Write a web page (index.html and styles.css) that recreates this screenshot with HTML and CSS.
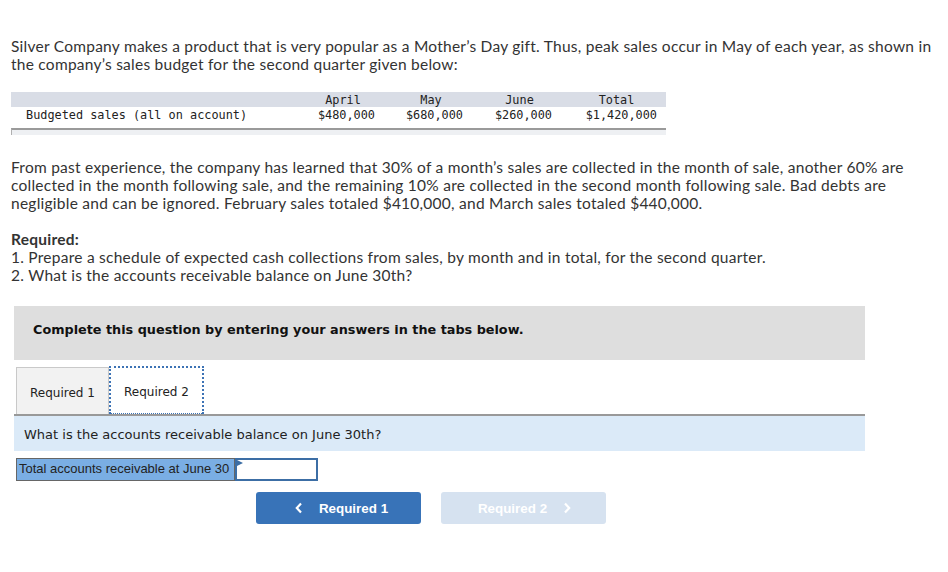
FILE: index.html
```html
<!DOCTYPE html>
<html>
<head>
<meta charset="utf-8">
<link rel="stylesheet" href="styles.css">
</head>
<body>
<div class="page">
  <p class="para p1">Silver Company makes a product that is very popular as a Mother’s Day gift. Thus, peak sales occur in May of each year, as shown in the company’s sales budget for the second quarter given below:</p>

  <div class="budget">
    <div class="brow head">
      <div class="lbl"></div>
      <div class="c c1">April</div>
      <div class="c c2">May</div>
      <div class="c c3">June</div>
      <div class="c c4">Total</div>
    </div>
    <div class="brow data">
      <div class="lbl">Budgeted sales (all on account)</div>
      <div class="c c1">$480,000</div>
      <div class="c c2">$680,000</div>
      <div class="c c3">$260,000</div>
      <div class="c c4">$1,420,000</div>
    </div>
    <div class="bfoot"></div>
  </div>

  <p class="para p2">From past experience, the company has learned that 30% of a month’s sales are collected in the month of sale, another 60% are collected in the month following sale, and the remaining 10% are collected in the second month following sale. Bad debts are negligible and can be ignored. February sales totaled $410,000, and March sales totaled $440,000.</p>

  <div class="para p3">
    <div class="req">Required:</div>
    <div>1. Prepare a schedule of expected cash collections from sales, by month and in total, for the second quarter.</div>
    <div>2. What is the accounts receivable balance on June 30th?</div>
  </div>

  <div class="banner">Complete this question by entering your answers in the tabs below.</div>

  <div class="tabs">
    <div class="tab">Required 1</div>
    <div class="tab active">Required 2</div>
  </div>
  <div class="question">What is the accounts receivable balance on June 30th?</div>

  <div class="answer">
    <div class="alabel">Total accounts receivable at June 30</div>
    <div class="ainput"><span class="flag"></span></div>
  </div>

  <div class="nav">
    <div class="btn prev"><svg class="chev" width="8" height="12" viewBox="0 0 8 12"><path d="M6 1.5 L1.8 6 L6 10.5" fill="none" stroke="#fff" stroke-width="2.2"/></svg><span>Required 1</span></div>
    <div class="btn next"><span>Required 2</span><svg class="chev" width="8" height="12" viewBox="0 0 8 12"><path d="M2 1.5 L6.2 6 L2 10.5" fill="none" stroke="#fff" stroke-width="2.2"/></svg></div>
  </div>
</div>
</body>
</html>
```
FILE: styles.css
```css
html, body { margin: 0; padding: 0; background: #fff; }
.page { padding: 37px 0 0 11px; width: 930px; }
.para {
  font-family: "Lato", "Liberation Sans", sans-serif;
  font-size: 15.5px;
  letter-spacing: 0.25px;
  line-height: 18px;
  color: #333;
  margin: 0;
}
.p1 { width: 930px; }
.budget { margin-top: 19px; width: 655px; font-family: "DejaVu Sans Mono", monospace; font-size: 11.85px; color: #222; }
.brow { display: flex; }
.brow.head { background: #d9dde6; height: 15px; line-height: 17px; }
.brow.data { height: 16px; line-height: 17px; }
.lbl { width: 285px; padding-left: 15px; box-sizing: border-box; white-space: pre; }
.c { text-align: right; box-sizing: border-box; }
.head .c { text-align: center; }
.c1 { width: 88px; padding-right: 9px; }
.c2 { width: 88px; padding-right: 9px; }
.c3 { width: 89px; padding-right: 9px; }
.c4 { width: 105px; padding-right: 9px; }
.head .c1 { padding-left: 6px; padding-right: 0; }
.head .c2 { padding-left: 6px; padding-right: 0; }
.head .c3 { padding-left: 6px; padding-right: 0; }
.head .c4 { padding-left: 6px; padding-right: 0; }
.bfoot { margin-top: 5px; height: 5px; border-top: 2px solid #9a9a9a; border-left: 1px solid #b0b0b0; background: #eef0f3; }
.p2 { margin-top: 23px; width: 900px; }
.p3 { margin-top: 18px; }
.req { font-weight: bold; }
.banner {
  margin: 22px 0 0 3px;
  width: 851px; height: 54px; box-sizing: border-box;
  background: #dedede;
  font-family: "DejaVu Sans", Verdana, sans-serif;
  font-weight: bold; font-size: 12.8px; color: #111;
  padding: 16px 0 0 19px;
}
.tabs { display: flex; margin: 7px 0 0 5px; height: 47px; }
.tab {
  width: 93px; box-sizing: border-box;
  background: #f2f2f2; border: 1px solid #c9c9c9; border-bottom: none;
  font-family: "DejaVu Sans", Verdana, sans-serif; font-size: 12px; color: #222;
  text-align: center; line-height: 50px;
}
.tab.active { background: #fff; border: 2px dotted #3d73b5; border-bottom: 1px dotted #3d73b5; width: 95px; line-height: 48px; margin-top: -1px; height: 48px; }
.question {
  margin-left: 3px; width: 851px; height: 37px; box-sizing: border-box;
  border-top: 2px solid #999; background: #dbeaf8;
  font-family: "DejaVu Sans", Verdana, sans-serif; font-size: 13px; color: #222;
  padding: 11px 0 0 10px;
}
.answer { display: flex; margin: 7px 0 0 5px; height: 23px; }
.alabel {
  width: 219px; box-sizing: border-box; background: #7aaee4; border: 1px solid #666;
  font-family: "Liberation Sans", Arial, sans-serif; font-size: 13px; color: #222;
  padding-left: 2px; line-height: 20px; white-space: nowrap; overflow: hidden;
}
.ainput { position: relative; width: 83px; box-sizing: border-box; background: #fff; border: 2px solid #3c6ea5; }
.flag { position: absolute; left: 0; top: 0; width: 0; height: 0; border-left: 6px solid #3c6ea5; border-top: 3px solid transparent; border-bottom: 3px solid transparent; }
.nav { display: flex; margin: 11px 0 0 245px; gap: 20px; }
.btn {
  width: 165px; height: 32px; border-radius: 3px;
  display: flex; align-items: center; justify-content: center; gap: 16px;
  font-family: "Liberation Sans", Arial, sans-serif; font-weight: bold; font-size: 13.4px; color: #fff;
}
.btn.prev { background: #3873b8; }
.btn.prev svg { margin-left: 6px; }
.btn.next { background: #d6e2f0; gap: 16px; }
.btn.next span { margin-left: 2px; }
```
